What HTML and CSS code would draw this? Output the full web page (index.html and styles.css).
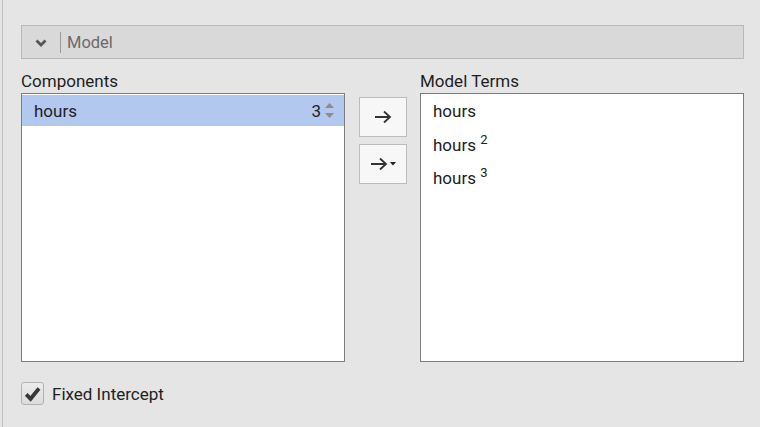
FILE: index.html
```html
<!DOCTYPE html>
<html>
<head>
<meta charset="utf-8">
<link rel="stylesheet" href="styles.css">
</head>
<body>
<div class="frame">
  <div class="panel">
    <div class="header">
      <span class="chev">
        <svg width="12" height="8" viewBox="0 0 12 8"><path d="M1.5 1.5 L6 6 L10.5 1.5" fill="none" stroke="#555" stroke-width="2.8"/></svg>
      </span>
      <span class="sep"></span>
      <span class="title">Model</span>
    </div>
    <div class="lists">
      <div class="label">Components</div>
      <div></div>
      <div class="label">Model Terms</div>
      <div class="listbox">
        <div class="row selected">
          <span>hours</span>
          <span class="spin">
            <span class="num">3</span>
            <svg width="11" height="20" viewBox="0 0 11 20"><path d="M5.5 2 L10 7 L1 7 Z" fill="#8c8c8c"/><path d="M1 12 L10 12 L5.5 17 Z" fill="#8c8c8c"/></svg>
          </span>
        </div>
      </div>
      <div class="buttons">
        <div class="btn">
          <svg width="18" height="14" viewBox="0 0 18 14"><path d="M1 7 H16 M10 1.5 L16 7 L10 12.5" fill="none" stroke="#333" stroke-width="1.8"/></svg>
        </div>
        <div class="btn">
          <svg width="18" height="14" viewBox="0 0 18 14"><path d="M1 7 H16 M10 1.5 L16 7 L10 12.5" fill="none" stroke="#333" stroke-width="1.8"/></svg>
          <svg class="caret" width="6" height="4" viewBox="0 0 6 4"><path d="M0 0 H6 L3 3.5 Z" fill="#222"/></svg>
        </div>
      </div>
      <div class="listbox terms">
        <div class="term">hours</div>
        <div class="term">hours <sup>2</sup></div>
        <div class="term">hours <sup>3</sup></div>
      </div>
    </div>
    <label class="check">
      <span class="box">
        <svg width="17" height="16" viewBox="0 0 17 16"><path d="M2.2 8.3 L6.6 12.8 L15 2.5" fill="none" stroke="#383838" stroke-width="3.8" stroke-linejoin="miter"/></svg>
      </span>
      <span>Fixed Intercept</span>
    </label>
  </div>
</div>
</body>
</html>
```

FILE: styles.css
```css
html, body {
  margin: 0;
  padding: 0;
  background: #e5e5e5;
  font-family: Roboto, "Liberation Sans", sans-serif;
  font-size: 17px;
  color: #222;
}
.frame {
  padding-left: 2px;
  height: 427px;
  box-sizing: border-box;
  overflow: hidden;
}
.panel {
  border-left: 1px solid #c2c2c2;
  height: 427px;
  box-sizing: border-box;
  padding: 25px 16px 0 18px;
}
.header {
  height: 34px;
  box-sizing: border-box;
  border: 1px solid #b8b8b8;
  background: #d9d9d9;
  display: flex;
  align-items: center;
}
.chev {
  width: 38px;
  display: flex;
  justify-content: center;
  padding-top: 1px;
}
.sep {
  width: 1px;
  height: 21px;
  background: #9a9a9a;
}
.title {
  margin-left: 6px;
  color: #6a6a6a;
  font-size: 16.5px;
}
.lists {
  display: grid;
  grid-template-columns: 324px 75px 324px;
  grid-template-rows: 34px 269px;
}
.label {
  align-self: end;
  padding-bottom: 2px;
  line-height: 19px;
  color: #1e1e1e;
}
.listbox {
  background: #fff;
  border: 1px solid #7c7c7c;
  padding: 1px 0;
  box-sizing: border-box;
}
.row {
  height: 31px;
  display: flex;
  align-items: center;
  justify-content: space-between;
  padding: 0 9px 0 12px;
}
.row.selected {
  background: #b3c8ee;
}
.spin {
  display: flex;
  align-items: center;
  gap: 3px;
}
.buttons {
  display: flex;
  flex-direction: column;
  padding: 4px 13px 0 14px;
  gap: 7px;
}
.btn {
  height: 40px;
  box-sizing: border-box;
  border: 1px solid #bcbcbc;
  background: #f7f7f7;
  display: flex;
  align-items: center;
  justify-content: center;
  gap: 2px;
}
.caret {
  margin-top: -1px;
}
.terms {
  padding: 1px 12px;
}
.term {
  height: 33.5px;
  line-height: 33.5px;
}
.term sup {
  font-size: 13px;
  vertical-align: 0;
  position: relative;
  top: -7px;
}
.check {
  display: flex;
  align-items: center;
  gap: 8px;
  margin-top: 20px;
  color: #222;
}
.box {
  width: 23px;
  height: 23px;
  box-sizing: border-box;
  border: 1px solid #b2b2b2;
  border-radius: 3px;
  background: linear-gradient(#ececec, #dcdcdc);
  display: flex;
  align-items: center;
  justify-content: center;
}
```
